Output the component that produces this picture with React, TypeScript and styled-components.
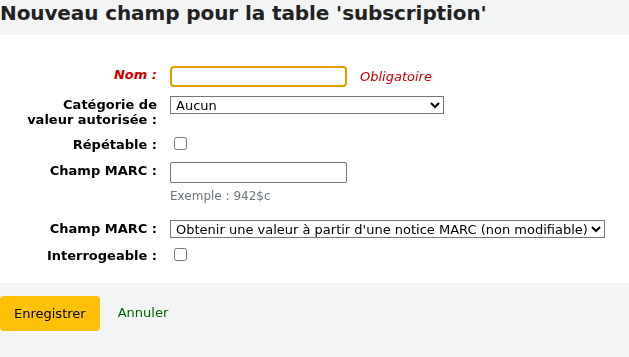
import styled, { createGlobalStyle } from "styled-components";

const GlobalStyle = createGlobalStyle`
  body {
    margin: 0;
    background: #ffffff;
    font-family: "DejaVu Sans", "Liberation Sans", sans-serif;
    font-size: 13px;
    color: #000;
  }
`;

const App = () => {
  return (
    <>
      <GlobalStyle />
      <Title>Nouveau champ pour la table 'subscription'</Title>
      <Form>
        <FieldList>
          <Row>
            <Label $required>Nom :</Label>
            <Field>
              <Inline>
                <TextInput $focused autoFocus />
                <Required>Obligatoire</Required>
              </Inline>
            </Field>
          </Row>
          <Row>
            <Label>
              Catégorie de
              <br />
              valeur autorisée :
            </Label>
            <Field>
              <Select defaultValue="" $width="274px">
                <option value="">Aucun</option>
              </Select>
            </Field>
          </Row>
          <Row>
            <Label>Répétable :</Label>
            <Field>
              <Check type="checkbox" />
            </Field>
          </Row>
          <Row>
            <Label>Champ MARC :</Label>
            <Field>
              <TextInput />
              <Hint>Exemple : 942$c</Hint>
            </Field>
          </Row>
          <Row>
            <Label>Champ MARC :</Label>
            <Field>
              <Select defaultValue="marc">
                <option value="marc">
                  Obtenir une valeur à partir d'une notice MARC (non modifiable)
                </option>
              </Select>
            </Field>
          </Row>
          <Row>
            <Label>Interrogeable :</Label>
            <Field>
              <Check type="checkbox" />
            </Field>
          </Row>
        </FieldList>
      </Form>
      <Actions>
        <SaveButton type="button">Enregistrer</SaveButton>
        <CancelLink href="#">Annuler</CancelLink>
      </Actions>
    </>
  );
};

export default App;

const Title = styled.h1`
  margin: 0;
  height: 35px;
  padding: 0;
  background-color: #f3f4f4;
  color: #222;
  font-size: 20px;
  font-weight: bold;
  line-height: 26px;
  letter-spacing: -0.1px;
`;

const Form = styled.div`
  padding: 31px 0 19px;
`;

const FieldList = styled.ol`
  list-style: none;
  margin: 0;
  padding: 0;
  display: flex;
  flex-direction: column;
  gap: 9px;
`;

const Row = styled.li`
  display: flex;
  align-items: flex-start;
`;

const Label = styled.label<{ $required?: boolean }>`
  width: 157px;
  flex: none;
  text-align: right;
  font-weight: bold;
  line-height: 15px;
  padding-top: 1px;
  color: ${(p) => (p.$required ? "#cc0000" : "#000")};
  font-style: ${(p) => (p.$required ? "italic" : "normal")};
`;

const Field = styled.div`
  margin-left: 13px;
  display: flex;
  flex-direction: column;
`;

const Inline = styled.div`
  display: flex;
  align-items: center;
  gap: 13px;
`;

const TextInput = styled.input<{ $focused?: boolean }>`
  box-sizing: border-box;
  width: 177px;
  height: 21px;
  margin: 0;
  padding: 1px 3px;
  font-family: inherit;
  font-size: 13px;
  border: 1px solid #767676;
  border-radius: 2px;
  outline: none;
  caret-color: #8b0000;
  ${(p) =>
    p.$focused &&
    `
    border: 2px solid #e69a00;
    border-radius: 4px;
  `}
`;

const Required = styled.span`
  color: #cc0000;
  font-style: italic;
`;

const Select = styled.select<{ $width?: string }>`
  margin: 0;
  height: 18px;
  width: ${(p) => p.$width ?? "auto"};
  font-family: inherit;
  font-size: 13px;
  color: #000;
  border: 1px solid #767676;
  background: #fff;
  padding: 0 0 0 1px;
`;

const Check = styled.input`
  margin: 1px 0 3px 4px;
  width: 13px;
  height: 13px;
`;

const Hint = styled.div`
  margin-top: 6px;
  margin-bottom: 7px;
  color: #6c757d;
  font-size: 12px;
  line-height: 15px;
`;

const Actions = styled.div`
  background-color: #f3f4f4;
  height: 74px;
  padding-top: 13px;
  box-sizing: border-box;
  display: flex;
  align-items: flex-start;
  gap: 18px;
`;

const SaveButton = styled.button`
  height: 35px;
  padding: 0 14px;
  background-color: #ffc107;
  border: none;
  border-radius: 4px;
  font-family: inherit;
  font-size: 13px;
  color: #000;
`;

const CancelLink = styled.a`
  color: #006100;
  text-decoration: none;
  line-height: 33px;
`;
